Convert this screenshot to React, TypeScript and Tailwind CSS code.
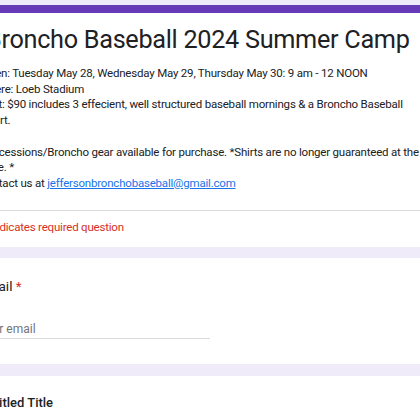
import React from "react";

const body = { fontFamily: "Roboto, 'Liberation Sans', sans-serif" };

export default function App() {
  return (
    <div className="w-[420px] h-[420px] overflow-hidden bg-[#f0ebf8]">
      <div className="ml-[-40px] w-[680px] pt-[5px] flex flex-col" style={body}>
        {/* Header card */}
        <div className="bg-white">
          <div className="h-[8px] bg-[#673ab7]" />
          <div className="pl-[19px] pt-[8px] pb-[18px] text-[#202124]">
            <div className="ml-[7px] text-[25.25px] leading-[38px] tracking-[-0.3px] whitespace-nowrap">
              Broncho Baseball 2024 Summer Camp
            </div>
            <div className="mt-[7px] text-[11.5px] leading-[15.7px] tracking-[-0.2px] whitespace-nowrap">
              <div>When: Tuesday May 28, Wednesday May 29, Thursday May 30: 9 am - 12 NOON</div>
              <div>Where: Loeb Stadium</div>
              <div>Cost: $90 includes 3 effecient, well structured baseball mornings &amp; a Broncho Baseball</div>
              <div>t-shirt.</div>
              <div>&nbsp;</div>
              <div>Concessions/Broncho gear available for purchase. *Shirts are no longer guaranteed at the camp</div>
              <div>done. *</div>
              <div>
                Contact us at{" "}
                <a className="text-[#1a73e8] underline">jeffersonbronchobaseball@gmail.com</a>
              </div>
            </div>
          </div>
          <div className="h-px bg-[#dadce0]" />
          <div className="pl-[23px] pt-[8px] pb-[12px] text-[11.5px] leading-[16px] tracking-[-0.2px] text-[#d93025]">
            * Indicates required question
          </div>
        </div>

        {/* Email card */}
        <div className="mt-[11px] bg-white h-[106px] pl-[19px] pt-[17px]">
          <div className="text-[13.5px] leading-[22px] text-[#202124]">
            Email <span className="text-[#d93025]">*</span>
          </div>
          <div className="mt-[23px] w-[231px] h-[19px] flex items-center border-b border-[#dadce0] text-[12px] leading-[16px] text-[#70757a]">
            Your email
          </div>
        </div>

        {/* Untitled card */}
        <div className="mt-[12px] bg-white h-[80px] pl-[19px] pt-[16px]">
          <div className="text-[13px] leading-[22px] text-[#202124] font-medium">Untitled Title</div>
        </div>
      </div>
    </div>
  );
}
